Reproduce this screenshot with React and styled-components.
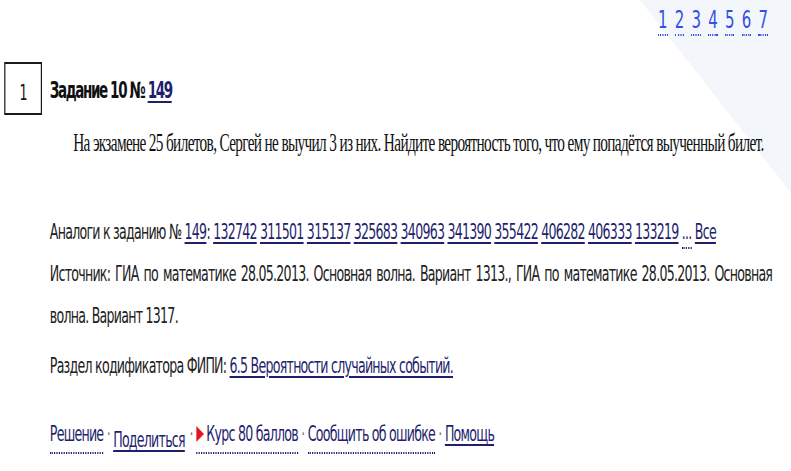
import React from "react";
import styled, { createGlobalStyle } from "styled-components";

const SCALE = 0.6;
const VIRTUAL_WIDTH = Math.round(791 / SCALE);

const GlobalStyle = createGlobalStyle`
  html, body {
    margin: 0;
    padding: 0;
    height: 100%;
    overflow: hidden;
  }
  body {
    background: #fff linear-gradient(to top right, #ffffff 50%, #f3f7fc 50%) no-repeat right top / 151px 193px;
  }
`;

const Page = styled.div`
  width: ${VIRTUAL_WIDTH}px;
  box-sizing: border-box;
  padding-right: 31px;
  transform: scaleX(${SCALE});
  transform-origin: 0 0;
  font-family: "DejaVu Sans", Verdana, sans-serif;
  font-size: 21px;
  letter-spacing: -1.25px;
  color: #222;
`;

const Pager = styled.nav`
  height: 36px;
  box-sizing: border-box;
  padding-top: 6px;
  padding-right: 7px;
  display: flex;
  justify-content: flex-end;
  gap: 12px;
  font-size: 25px;
  line-height: 28px;
`;

const PageLink = styled.a`
  display: inline-block;
  color: #3450e4;
  text-decoration: none;
  border-bottom: 2px dotted #3450e4;
  letter-spacing: 0;
`;

const TaskHead = styled.div`
  display: flex;
  align-items: flex-start;
  margin-top: 26px;
`;

const NumBox = styled.div`
  width: 63px;
  height: 53px;
  box-sizing: border-box;
  margin-left: 7px;
  border: 2px solid #1a1a1a;
  display: flex;
  align-items: center;
  justify-content: center;
  padding-top: 8px;
  font-size: 21px;
  color: #111;
`;

const TaskTitle = styled.h2`
  margin: 0 0 0 13px;
  font-size: 22.5px;
  line-height: 56px;
  font-weight: bold;
  letter-spacing: -2.3px;
  color: #111;
`;

const Link = styled.a`
  color: #1f1f6e;
  text-decoration: underline;
  text-decoration-thickness: 2px;
  text-underline-offset: 3px;
`;

const DotLink = styled.a`
  color: #1f1f6e;
  text-decoration: none;
  border-bottom: 2px dotted #1f1f6e;
  padding-bottom: ${(p) => p.$gap ?? 6}px;
`;

const Condition = styled.p`
  margin: 10px 0 0 122px;
  font-family: "Liberation Serif", "Times New Roman", serif;
  font-size: 25.5px;
  line-height: 30px;
  letter-spacing: -1.1px;
  white-space: nowrap;
  color: #111;
`;

const Meta = styled.section`
  margin: 53px 0 0 83px;
  line-height: 42px;
`;

const MetaLine = styled.p`
  margin: ${(p) => p.$top ?? 0}px 0 0;
  text-align: ${(p) => (p.$justify ? "justify" : "left")};
`;

const Actions = styled.div`
  margin: 26px 0 0 83px;
  line-height: 42px;
`;

const Sep = styled.span`
  color: #777;
`;

const Share = styled(Link)`
  display: inline-block;
  vertical-align: -6px;
  line-height: 30px;
  margin-right: 8px;
`;

const Triangle = styled.svg`
  width: 13px;
  height: 16px;
  vertical-align: -1px;
  margin-right: 4px;
`;

const analogs = [
  "132742",
  "311501",
  "315137",
  "325683",
  "340963",
  "341390",
  "355422",
  "406282",
  "406333",
  "133219",
];

export default function App() {
  return (
    <>
      <GlobalStyle />
      <Page>
        <Pager>
          {[1, 2, 3, 4, 5, 6, 7].map((n) => (
            <PageLink key={n} href="#">
              {n}
            </PageLink>
          ))}
        </Pager>

        <TaskHead>
          <NumBox>1</NumBox>
          <TaskTitle>
            Задание 10 № <Link href="#">149</Link>
          </TaskTitle>
        </TaskHead>

        <Condition>
          На экзамене 25 билетов, Сергей не выучил 3 из них. Найдите
          вероятность того, что ему попадётся выученный билет.
        </Condition>

        <Meta>
          <MetaLine>
            Аналоги к заданию № <Link href="#">149</Link>:{" "}
            {analogs.map((a) => (
              <React.Fragment key={a}>
                <Link href="#">{a}</Link>{" "}
              </React.Fragment>
            ))}
            <DotLink href="#" $gap={3}>
              ...
            </DotLink>{" "}
            <Link href="#">Все</Link>
          </MetaLine>
          <MetaLine $justify>
            Источник: ГИА по математике 28.05.2013. Основная волна. Вариант
            1313., ГИА по математике 28.05.2013. Основная волна. Вариант 1317.
          </MetaLine>
          <MetaLine $top={8}>
            Раздел кодификатора ФИПИ:{" "}
            <Link href="#">6.5 Вероятности случайных событий.</Link>
          </MetaLine>
        </Meta>

        <Actions>
          <DotLink href="#">Решение</DotLink> <Sep>·</Sep>{" "}
          <Share href="#">Поделиться</Share>
          <Sep>·</Sep>{" "}
          <DotLink href="#">
            <Triangle viewBox="0 0 13 16">
              <polygon points="0,0 13,8 0,16" fill="#e8141c" />
            </Triangle>
            Курс 80 баллов
          </DotLink>{" "}
          <Sep>·</Sep> <DotLink href="#">Сообщить об ошибке</DotLink>{" "}
          <Sep>·</Sep> <Link href="#">Помощь</Link>
        </Actions>
      </Page>
    </>
  );
}
